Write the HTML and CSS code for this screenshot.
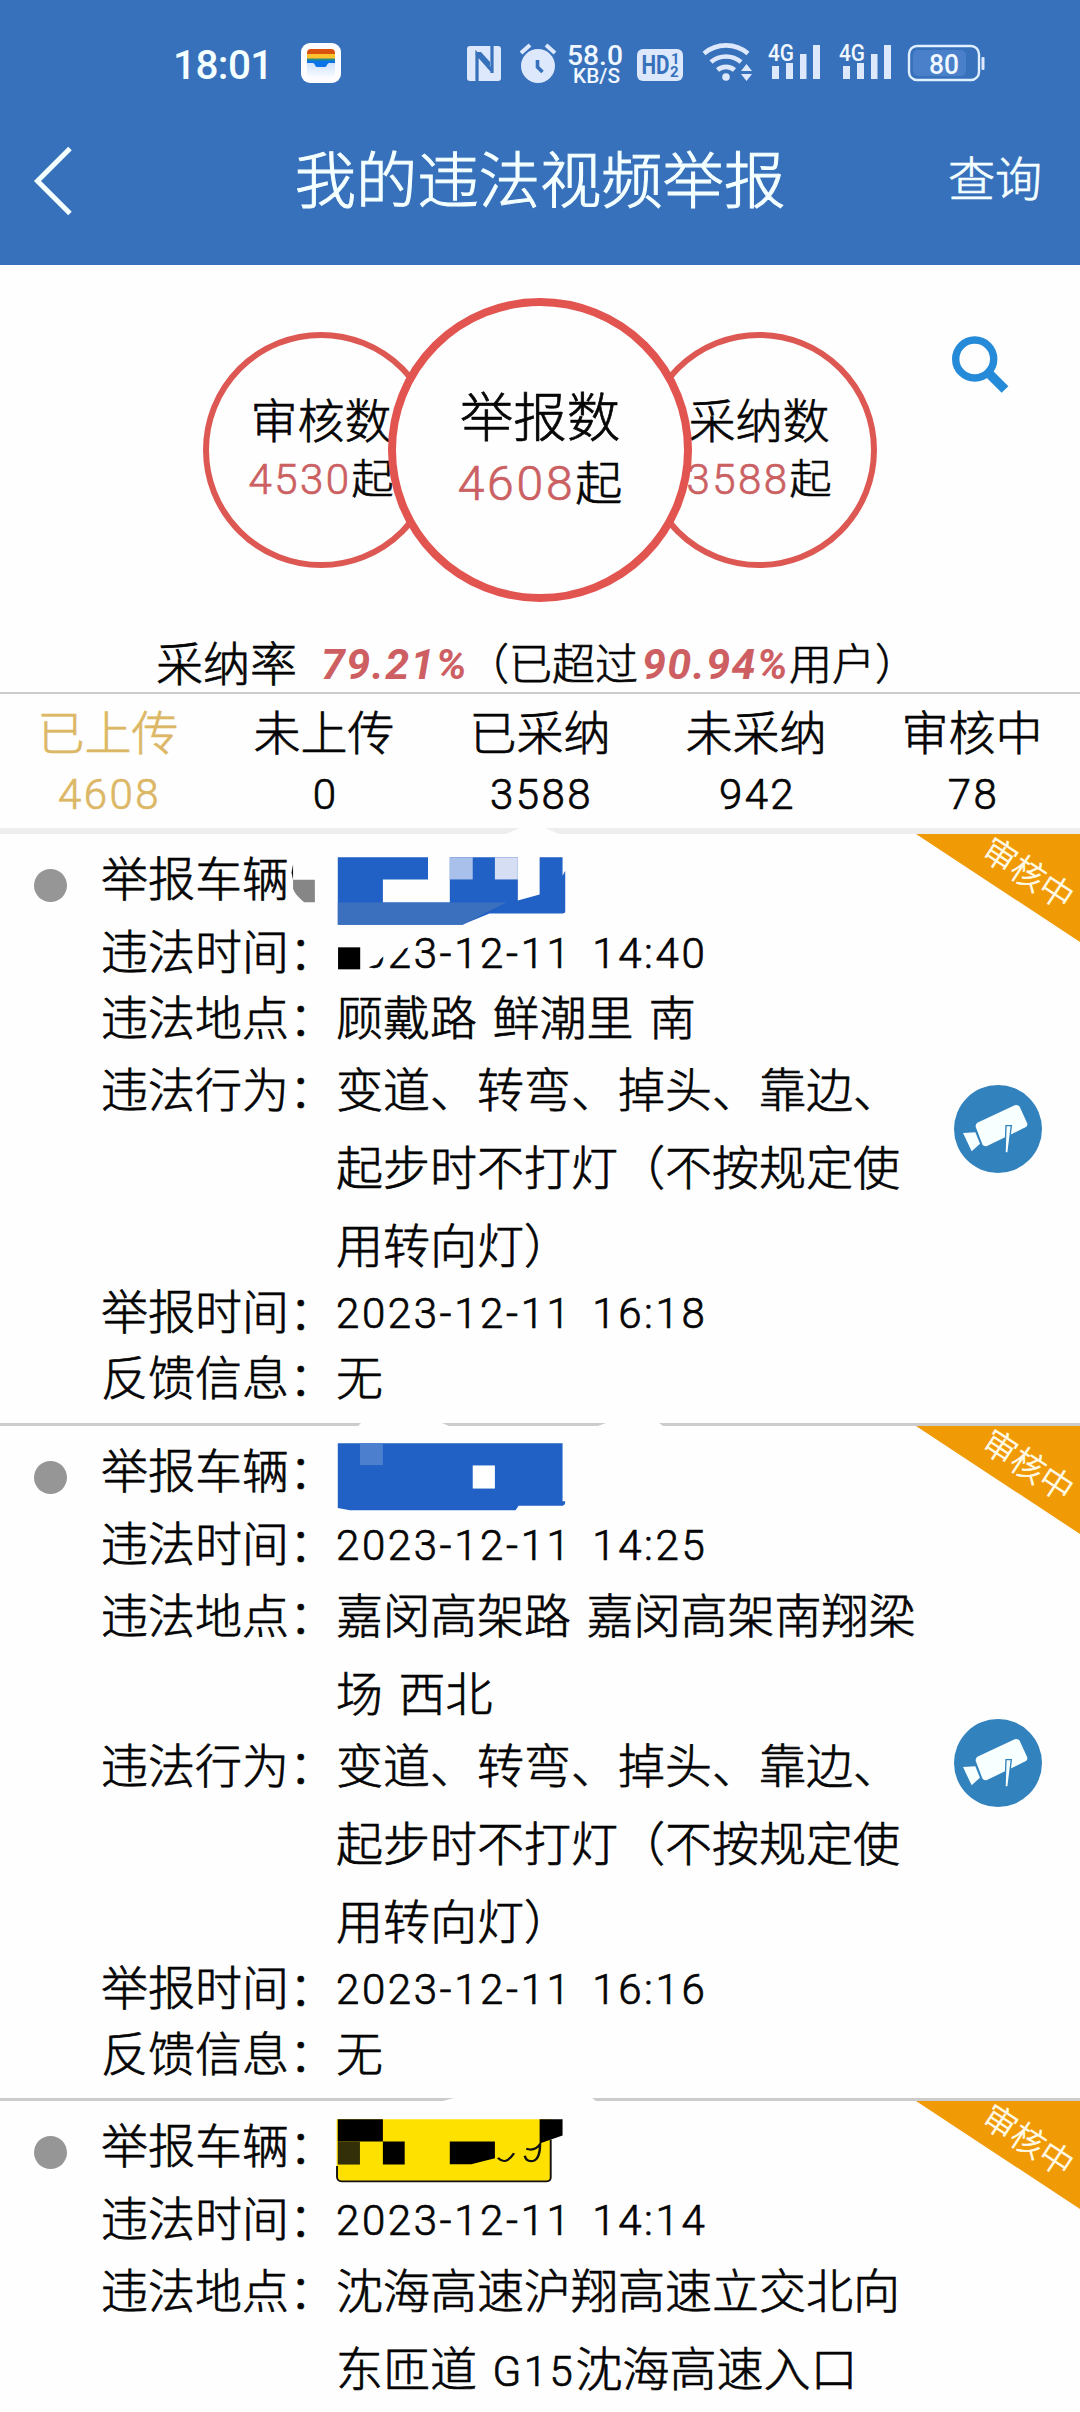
FILE: index.html
```html
<!DOCTYPE html>
<html lang="zh-CN">
<head>
<meta charset="utf-8">
<title>我的违法视频举报</title>
<link rel="stylesheet" href="styles.css">
</head>
<body>
<header class="header">
  <div class="status">
    <span class="clock">18:01</span>
    <svg class="app-icon" width="40" height="40" viewBox="0 0 40 40">
      <defs><linearGradient id="sheet" x1="0" y1="0" x2="0" y2="1"><stop offset="0" stop-color="#cfe2fb"/><stop offset="1" stop-color="#fbfdff"/></linearGradient></defs>
      <rect width="40" height="40" rx="9" fill="#fdfdff"/>
      <path d="M6 20h28v10a5 5 0 0 1-5 5H11a5 5 0 0 1-5-5z" fill="url(#sheet)"/>
      <path d="M6 12V10a4 4 0 0 1 4-4h20a4 4 0 0 1 4 4v2z" fill="#d9530f"/>
      <rect x="6" y="11" width="28" height="5" fill="#ffc22e"/>
      <path d="M6 16h28v4h-6c-2 0-2 4-4 4h-8c-2 0-2-4-4-4H6z" fill="#0b74e8"/>
      <rect x="6" y="15.500" width="28" height="2" fill="#2a8a80"/>
    </svg>
    <svg class="tray" width="526" height="48" viewBox="460 40 526 48">
      <g fill="#dde8fc">
        <rect x="467" y="46" width="34" height="35" rx="3"/>
        <g fill="none" stroke="#3770bb" stroke-width="3.200"><path d="M477 81V54l15 17M492 46v27M476 53l13 13"/></g>
        <path d="M477 52h4l9 10v4l-10-8z" fill="#3770bb"/>
        <circle cx="538" cy="66" r="17"/>
        <path d="M521 53l9-8M546 45l9 8" stroke="#dde8fc" stroke-width="4"/>
        <path d="M537.500 60v7l5 5" stroke="#3770bb" stroke-width="3.600" fill="none"/>
        <rect x="637" y="49" width="46" height="32" rx="6"/>
        <g fill="none" stroke="#dde8fc" stroke-width="4.600"><path d="M704 53.500a34 34 0 0 1 44 0M711 62a23 23 0 0 1 30 0M717.500 70a13 13 0 0 1 17 0"/></g>
        <circle cx="726" cy="77" r="3.800"/>
        <path d="M741 71l5.500-7 5.500 7zM741 74l5.500 7 5.500-7z"/>
        <path id="bars" d="M772 66h7v13h-7zM786 63h7v16h-7zM800 54h6.500v25H800zM813 45h7v34h-7z"/>
        <use href="#bars" x="71"/>
        <rect x="981.500" y="57" width="3" height="13" rx="1"/>
      </g>
      <rect x="909" y="46" width="70" height="34" rx="8" fill="none" stroke="#dff0ff" stroke-width="2.400"/>
      <rect x="913" y="50" width="53" height="26" rx="5" fill="#4a80ca"/>
      <g class="tray-text">
        <text x="567" y="64.500" font-size="27" textLength="56" lengthAdjust="spacingAndGlyphs">58.0</text>
        <text x="573" y="83" font-size="20.500" textLength="47" lengthAdjust="spacingAndGlyphs">KB/S</text>
        <text x="768" y="60.500" font-size="24" textLength="26" lengthAdjust="spacingAndGlyphs">4G</text>
        <text x="839" y="60.500" font-size="24" textLength="26" lengthAdjust="spacingAndGlyphs">4G</text>
        <text x="929" y="73.500" font-size="28" textLength="30" lengthAdjust="spacingAndGlyphs">80</text>
        <g class="tray-dark">
          <text x="641.500" y="74" font-size="25" textLength="28" lengthAdjust="spacingAndGlyphs">HD</text>
          <text x="671" y="64" font-size="15">1</text>
          <text x="670" y="77" font-size="15">2</text>
        </g>
      </g>
    </svg>
  </div>
  <nav class="nav">
    <svg class="back" width="60" height="76" viewBox="0 0 60 76"><path d="M50 5.500L17.500 38 50 70.500" fill="none" stroke="#f4ffff" stroke-width="5"/></svg>
    <h1 class="title">我的违法视频举报</h1>
    <span class="query">查询</span>
  </nav>
</header>

<section class="summary">
  <div class="rings">
    <div class="ring"><span class="ring-name">审核数</span><span class="ring-value"><b>4530</b>起</span></div>
    <div class="ring ring-big"><span class="ring-name">举报数</span><span class="ring-value"><b>4608</b>起</span></div>
    <div class="ring"><span class="ring-name">采纳数</span><span class="ring-value"><b>3588</b>起</span></div>
    <svg class="search" width="60" height="60" viewBox="950 334 60 60"><circle cx="974.700" cy="359" r="19" fill="none" stroke="#258bd8" stroke-width="7.400"/><path d="M988.500 373L1005 389.500" stroke="#258bd8" stroke-width="9.500"/></svg>
  </div>
  <p class="rate"><span class="rate-name">采纳率</span><em class="rate-own">79.21%</em><span>（已超过</span><em class="rate-rank">90.94%</em><span>用户）</span></p>
</section>

<nav class="tabs">
  <div class="tab tab-on"><span>已上传</span><b>4608</b></div>
  <div class="tab"><span>未上传</span><b>0</b></div>
  <div class="tab"><span>已采纳</span><b>3588</b></div>
  <div class="tab"><span>未采纳</span><b>942</b></div>
  <div class="tab"><span>审核中</span><b>78</b></div>
  <svg class="notch" width="1080" height="6" viewBox="0 0 1080 6"><path d="M506 6l14-6h25l14 6z" fill="#fefefe"/></svg>
</nav>

<main class="list">
  <article class="card">
    <i class="dot"></i>
    <dl class="fields">
      <div class="row plate-row"><dt>举报车辆：</dt><dd>
        <svg class="plate plate-low" width="276" height="68" viewBox="758 110 722 203" preserveAspectRatio="none">
          <path d="M765 110h60v140h-60z" fill="#fefefe"/>
          <path d="M766 132l-4 24 4 22z" fill="#111"/>
          <path d="M766 178h57v67h-28q-24-22-29-40z" fill="#868686"/>
          <path d="M883 111h236v66h-118v69h175V111h178v129l57-18V111h60v55l7-15v122q0 6-7 6h-191l-72 33H883z" fill="#2160c4"/>
          <path d="M883 246h441l-114 66H883z" fill="#3a70bd"/>
          <path d="M1176 111h60v66h-60z" fill="#a9c1ea"/><path d="M1294 111h60v66h-60z" fill="#d5def3"/>
        </svg></dd></div>
      <div class="row"><dt>违法时间：</dt><dd class="num">2023-12-11 14:40
        <svg class="smudge" width="84" height="40" viewBox="875 338 220 120" preserveAspectRatio="none">
          <path d="M875 338h215l-15 40-75 32-20 23-22 10v15h-83z" fill="#fefefe"/><path d="M883 381h58v66h-58z"/>
        </svg></dd></div>
      <div class="row"><dt>违法地点：</dt><dd>顾戴路 鲜潮里 南</dd></div>
      <div class="row tall"><dt>违法行为：</dt><dd>变道、转弯、掉头、靠边、起步时不打灯（不按规定使用转向灯）</dd></div>
      <div class="row"><dt>举报时间：</dt><dd class="num">2023-12-11 16:18</dd></div>
      <div class="row"><dt>反馈信息：</dt><dd>无</dd></div>
    </dl>
    <svg class="camera" width="88" height="88" viewBox="762 792 264 264"><circle cx="894" cy="924" r="132" fill="#3182bd"/><path d="M832 905l112-52q10-3 15 4l22 48q4 9-5 14l-115 56q-9 3-14-5l-20-53q-1-8 5-12z" fill="#f8ffff"/><path d="M789 936l37-2 14 34-25 23z" fill="#f8ffff"/><path d="M918 914h16l-10 82-9-1z" fill="#f8ffff" stroke="#3182bd" stroke-width="4"/></svg>
    <div class="ribbon"><span>审核中</span></div>
  </article>

  <article class="card">
    <svg class="gap" width="1080" height="3" viewBox="0 0 1080 3"><path d="M358 3l3-3h81l7 3zM598 3l8-3h53l4 3z" fill="#fefefe"/></svg>
    <i class="dot"></i>
    <dl class="fields">
      <div class="row plate-row"><dt>举报车辆：</dt><dd>
        <svg class="plate" width="276" height="68" viewBox="758 158 722 203" preserveAspectRatio="none">
          <path d="M883 159h588v173h7q0 13-7 13h-115l-8 14H915l-32-7z" fill="#2160c4"/>
          <path d="M941 159h60v65h-60z" fill="#4c80cf"/><path d="M1236 225h58v69h-58z" fill="#fff"/>
        </svg></dd></div>
      <div class="row"><dt>违法时间：</dt><dd class="num">2023-12-11 14:25</dd></div>
      <div class="row tall"><dt>违法地点：</dt><dd>嘉闵高架路 嘉闵高架南翔梁场 西北</dd></div>
      <div class="row tall"><dt>违法行为：</dt><dd>变道、转弯、掉头、靠边、起步时不打灯（不按规定使用转向灯）</dd></div>
      <div class="row"><dt>举报时间：</dt><dd class="num">2023-12-11 16:16</dd></div>
      <div class="row"><dt>反馈信息：</dt><dd>无</dd></div>
    </dl>
    <svg class="camera" width="88" height="88" viewBox="762 792 264 264"><circle cx="894" cy="924" r="132" fill="#3182bd"/><path d="M832 905l112-52q10-3 15 4l22 48q4 9-5 14l-115 56q-9 3-14-5l-20-53q-1-8 5-12z" fill="#f8ffff"/><path d="M789 936l37-2 14 34-25 23z" fill="#f8ffff"/><path d="M918 914h16l-10 82-9-1z" fill="#f8ffff" stroke="#3182bd" stroke-width="4"/></svg>
    <div class="ribbon"><span>审核中</span></div>
  </article>

  <article class="card">
    <svg class="gap" width="1080" height="3" viewBox="0 0 1080 3"><path d="M443 3l11-3h138l4 3z" fill="#fefefe"/></svg>
    <i class="dot"></i>
    <dl class="fields">
      <div class="row plate-row"><dt>举报车辆：</dt><dd>
        <svg class="plate" width="276" height="68" viewBox="758 113 722 203" preserveAspectRatio="none">
          <path d="M880 117h561v176q0 10-10 10H892q-12 0-12-14z" fill="#ffe100"/>
          <path d="M881 256v34q1 12 12 12h536q11 0 11-12V178" fill="none" stroke="#111" stroke-width="5"/>
          <path d="M883 117h118v66H883zM1001 183h57v69h-57zM1176 183h118v50l-62 18h-56zM1411 117h60v48l-60 24z"/>
          <path d="M883 183h58v69h-58z" fill="#332f08"/>
          <path d="M1302 232q20 24 42-14M1376 205q22 8 36-13q0 50-24 50q-12 0-16-16" fill="none" stroke="#111" stroke-width="6.500"/>
        </svg></dd></div>
      <div class="row"><dt>违法时间：</dt><dd class="num">2023-12-11 14:14</dd></div>
      <div class="row tall"><dt>违法地点：</dt><dd>沈海高速沪翔高速立交北向东匝道 <span class="road">G15</span>沈海高速入口</dd></div>
    </dl>
    <div class="ribbon"><span>审核中</span></div>
  </article>
</main>
</body>
</html>
```
FILE: styles.css
```css
* { box-sizing: border-box; margin: 0; padding: 0; }
html, body { height: 2412px; overflow: hidden; }
body {
  width: 1080px;
  background: #fefefe;
  color: #050505;
  font: 300 47px/66px "Noto Sans CJK SC", sans-serif;
  -webkit-text-stroke: 0.7px;
}
svg { display: block; flex: none; }
b { font-weight: 300; }

.header { height: 265px; background: #3770bb; color: #f4ffff; }
.status { display: flex; height: 126px; padding: 40px 0 0 173px; -webkit-text-stroke: 0; }
.clock { width: 128px; padding-top: 1px; font: 500 40.500px/48px Roboto, sans-serif; letter-spacing: -0.600px; }
.app-icon { margin-top: 3px; }
.tray { margin-left: 119px; }
.tray-text { font-family: Roboto, sans-serif; font-weight: 500; fill: #f0f7ff; }
.tray-dark { fill: #3770bb; font-weight: 700; }
.nav { display: grid; grid-template-columns: 200px 1fr 200px; align-items: center; height: 106px; }
.back { margin-left: 20px; margin-top: 3px; }
.title { margin-top: -5px; font-weight: 300; font-size: 61.300px; text-align: center; white-space: nowrap; -webkit-text-stroke: 1.100px; }
.query { justify-self: end; margin-top: -6px; padding-right: 38px; }

.summary { height: 427px; padding-top: 33px; }
.rings { display: flex; justify-content: center; align-items: center; height: 304px; position: relative; }
.ring {
  display: flex; flex-direction: column; align-items: center;
  width: 236px; height: 236px; padding-top: 51px;
  border: 6px solid #dd5853; border-radius: 50%; white-space: nowrap;
}
.ring-name { line-height: 58px; }
.ring-value { font-size: 42px; line-height: 58px; }
.ring b { margin-right: 0; font-family: Roboto, sans-serif; color: #cb6063; letter-spacing: 2.400px; }
.ring-big {
  z-index: 1; width: 304px; height: 304px; margin: 0 -51px; padding-top: 75px;
  border: 8px solid #e25450; background: #fefefe;
}
.ring-big .ring-name { font-size: 53.500px; line-height: 66px; }
.ring-big .ring-value { font-size: 47px; line-height: 66px; }
.ring-big b { font-size: 48px; letter-spacing: 2.800px; }
.search { position: absolute; left: 950px; top: 36px; }
.rate { display: flex; margin-top: 26px; padding-left: 156px; font-size: 43px; white-space: nowrap; }
.rate-name { font-size: 47px; }
.rate em { margin-top: 3px; font: italic 700 43px/66px Roboto, sans-serif; color: #cd5f63; letter-spacing: 1.400px; -webkit-text-stroke: 0; }
.rate-own { width: 145px; margin-left: 24px; }
.rate-rank { width: 147px; margin-left: 4px; }

.tabs {
  position: relative; display: grid; grid-template-columns: repeat(5, 1fr);
  height: 142px; border-top: 2px solid #ccc; border-bottom: 6px solid #eee;
}
.tab { display: flex; flex-direction: column; align-items: center; padding-top: 3px; }
.tab b { margin-top: -1px; padding-left: 3px; font-family: Roboto, sans-serif; font-size: 42px; letter-spacing: 2.400px; }
.tab-on { color: #dcb765; }
.notch { position: absolute; left: 0; bottom: -6px; }

.card { position: relative; display: flex; padding: 9px 0 15px 34px; border-bottom: 3px solid #ccc; }
.card + .card { padding-bottom: 14px; }
.card:last-child { border: 0; }
.gap { position: absolute; left: 0; top: -3px; }
.dot { flex: none; width: 33px; height: 33px; margin-top: 26px; border-radius: 50%; background: #969696; }
.fields { width: 861px; padding-left: 34px; }
.row { display: flex; }
.row dt { flex: none; width: 235px; white-space: nowrap; }
.row dd { position: relative; width: 588px; word-spacing: 5px; }
.row .num { height: 66px; padding-top: 5px; word-spacing: 7px; }
.num, .road { font-family: Roboto, sans-serif; font-size: 42px; letter-spacing: 2.600px; }
.road { line-height: 1; }
.plate-row { margin-bottom: 7px; }
.tall { margin-bottom: -6px; line-height: 78px; }
.plate { position: absolute; left: -46px; top: 8px; }
.plate-low { top: 14px; }
.smudge { position: absolute; left: -1px; top: 17px; }
.camera { align-self: center; margin: 6px 0 0 26px; }
.ribbon {
  position: absolute; right: 0; top: 0; width: 164px; height: 108px;
  background: #f09a05; clip-path: polygon(0 0, 100% 0, 100% 100%);
}
.ribbon span {
  position: absolute; left: 63px; top: 18px; color: #fffbe8;
  font-size: 33.500px; line-height: 40px; white-space: nowrap; transform: rotate(33.300deg);
}
```
